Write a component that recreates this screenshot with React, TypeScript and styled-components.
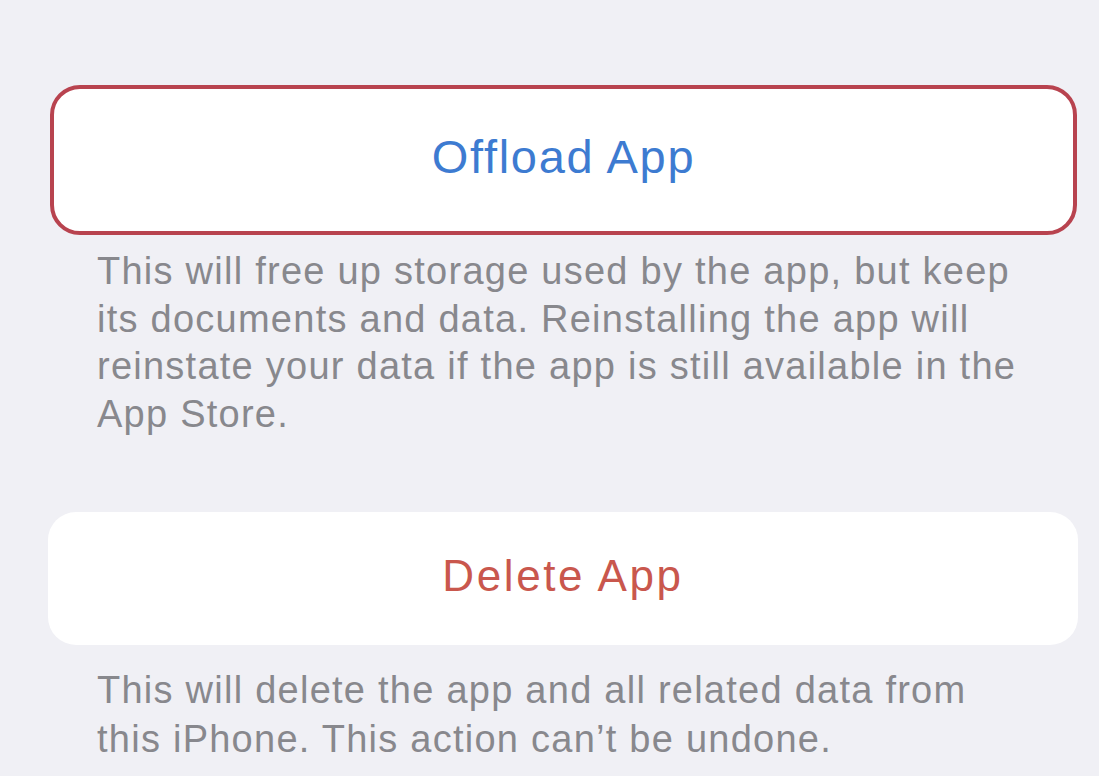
import React from "react";
import styled, { createGlobalStyle } from "styled-components";

const GlobalStyle = createGlobalStyle`
  html, body {
    margin: 0;
    padding: 0;
    background: #f0f0f5;
  }
  body {
    font-family: "Liberation Sans", Arial, sans-serif;
    -webkit-font-smoothing: antialiased;
  }
`;

const Page = styled.div`
  width: 1099px;
  height: 776px;
  overflow: hidden;
  background: #f0f0f5;
  padding-top: 85px;
  box-sizing: border-box;
  display: flex;
  flex-direction: column;
`;

const ActionCard = styled.button<{ $outlined?: boolean; $tone: "blue" | "red" }>`
  box-sizing: border-box;
  display: flex;
  align-items: center;
  justify-content: center;
  flex: none;
  margin: ${(p) => (p.$outlined ? "0 22px 0 50px" : "0 21px 0 48px")};
  height: ${(p) => (p.$outlined ? "150px" : "133px")};
  padding: ${(p) => (p.$outlined ? "0 0 8px" : "0 0 5px")};
  background: #ffffff;
  border: ${(p) => (p.$outlined ? "4px solid #b8434f" : "none")};
  border-radius: ${(p) => (p.$outlined ? "30px" : "28px")};
  font-family: "Liberation Sans", Arial, sans-serif;
  font-size: ${(p) => (p.$outlined ? "47px" : "44px")};
  letter-spacing: ${(p) => (p.$outlined ? "1.7px" : "2.6px")};
  color: ${(p) => (p.$tone === "blue" ? "#3d7bd1" : "#c9574d")};
  cursor: pointer;
`;

const Footnote = styled.p<{ $top: number; $lh: number }>`
  margin: ${(p) => p.$top}px 0 0 97px;
  width: 935px;
  font-size: 38px;
  letter-spacing: 1.25px;
  line-height: ${(p) => p.$lh}px;
  color: #88888d;
  flex: none;
`;

const Spacer = styled.div<{ $h: number }>`
  height: ${(p) => p.$h}px;
  flex: none;
`;

export default function App() {
  return (
    <>
      <GlobalStyle />
      <Page>
        <ActionCard $outlined $tone="blue">Offload App</ActionCard>
        <Footnote $top={13} $lh={47.5}>
          This will free up storage used by the app, but keep its documents and data.
          Reinstalling the app will reinstate your data if the app is still available in
          the App Store.
        </Footnote>
        <Spacer $h={74} />
        <ActionCard $tone="red">Delete App</ActionCard>
        <Footnote $top={21} $lh={49}>
          This will delete the app and all related data from this iPhone. This action
          can’t be undone.
        </Footnote>
      </Page>
    </>
  );
}
